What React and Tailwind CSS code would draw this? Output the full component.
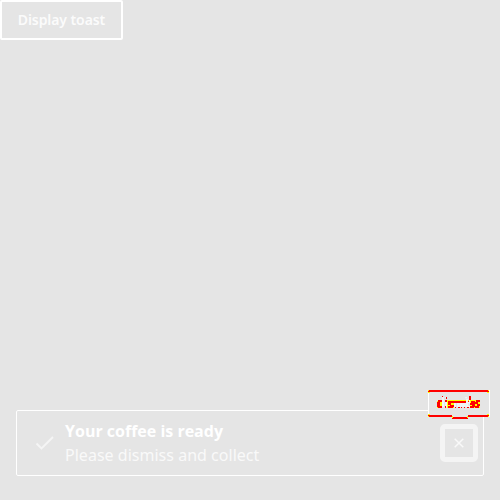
function Tooltip() {
  return (
    <div className="absolute left-[428px] top-[390px] h-[29px] w-[62px]">
      <div className="flex h-[27px] w-[62px] border-x border-white bg-[#e5e5e5] pl-2 pt-[5px] text-xs leading-4 text-white">dismiss</div>
      <svg className="absolute inset-0" width="62" height="29" shapeRendering="crispEdges">
        <path d="M0 0h61v2H0zM0 25h24v2H0zM40 25h21v2H40zM24 27h16v2H24z" fill="#ff0000" />
        <path d="M0 0h1v1H0zM0 2h2v1H0zM59 2h2v1H59zM60 0h1v1h-1zM0 24h2v1H0zM0 26h1v1H0zM59 24h2v1H59zM60 26h1v1h-1zM24 26h1v2h-1zM39 26h1v2h-1z" fill="#ffff00" />
        <path d="M9 11h5v7H9zM19 10h7v8h-7zM26 10h15v2H26zM42 10h10v8H42z" fill="#ffff00" />
        <path d="M10 10h4v2h-4zM9 12h3v5H9zM10 16h4v2h-4zM17 10h2v2h-2zM18 7h1v2h-1zM14 6h1v1h-1zM20 11h6v2h-6zM20 13h3v2h-3zM22 15h4v2h-4zM20 16h5v2h-5zM26 11h12v2H26zM38 11h3v1h-3zM43 11h4v2h-4zM42 13h5v2h-5zM44 15h3v2h-3zM42 16h4v2h-4zM48 10h4v2h-4zM47 12h3v2h-3zM49 14h3v2h-3zM47 16h4v2h-4zM41 6h2v4h-2z" fill="#ff0000" />
        <path d="M17 16h1v2h-1zM27 16h1v2h-1zM30 17h2v1h-2zM33 16h1v2h-1zM36 17h1v1h-1zM39 17h2v1h-2z" fill="#ff0000" />
        <path d="M14 9h2v8h-2zM26 13h2v4h-2zM29 13h2v4h-2zM32 13h2v4h-2zM35 13h2v4h-2zM38 9h2v8h-2z" fill="#f5f5f5" />
      </svg>
    </div>
  );
}

export default function App() {
  return (
    <main className="relative flex h-[500px] w-[500px] flex-col justify-between bg-[#e5e5e5] font-['Noto_Sans','Open_Sans',sans-serif]">
      <button className="flex h-10 w-[123px] items-center justify-center rounded-[2px] border-2 border-white text-sm font-semibold tracking-[-0.08px] text-[#fbfbfb]">
        Display toast
      </button>
      <section className="mx-4 mb-6 flex h-[66px] items-center rounded-[2px] border border-white pl-[18px] pr-[5px]">
        <svg width="20" height="16" viewBox="0 0 20 16" fill="none" stroke="#f5f5f5" strokeWidth="1.9">
          <path d="m1.5 8.5 5 5L18 2" />
        </svg>
        <div className="ml-[10px] flex-1 text-base leading-6">
          <div className="font-['Open_Sans',sans-serif] font-bold text-white">Your coffee is ready</div>
          <div className="tracking-[0.02px] text-[#f9f9f9]">Please dismiss and collect</div>
        </div>
        <button className="flex h-[38px] w-[38px] items-center justify-center rounded-[5px] border-[5px] border-[#f4f4f4]">
          <svg width="10" height="10" viewBox="0 0 10 10" fill="none" stroke="#f9f9f9" strokeWidth="1.5">
            <path d="m.7.7 8.6 8.6M9.3.7.7 9.3" />
          </svg>
        </button>
      </section>
      <Tooltip />
    </main>
  );
}
